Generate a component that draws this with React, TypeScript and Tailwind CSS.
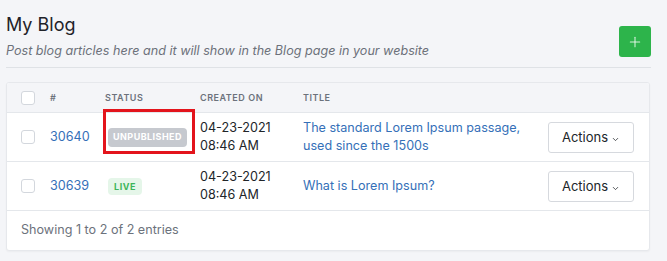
import { ChevronDown, Plus } from 'lucide-react';

const font = { fontFamily: 'Inter, "Noto Sans", sans-serif' };

type Post = {
  id: string;
  status: 'unpublished' | 'live';
  date: string;
  time: string;
  title: string;
};

const posts: Post[] = [
  {
    id: '30640',
    status: 'unpublished',
    date: '04-23-2021',
    time: '08:46 AM',
    title: 'The standard Lorem Ipsum passage, used since the 1500s',
  },
  {
    id: '30639',
    status: 'live',
    date: '04-23-2021',
    time: '08:46 AM',
    title: 'What is Lorem Ipsum?',
  },
];

const cols = 'grid grid-cols-[43px_55px_95px_103px_1fr_102px] items-center';

function Checkbox() {
  return (
    <span className="ml-[14px] block h-[14px] w-[14px] rounded-[3px] border border-[#d3d7dd] bg-white" />
  );
}

function StatusBadge({ status }: { status: Post['status'] }) {
  if (status === 'live') {
    return (
      <span className="ml-[3px] inline-flex h-[17px] items-center rounded-[4px] bg-[#e5f6e9] px-[6px] text-[9px] font-bold tracking-[0.06em] text-[#3cb55a]">
        LIVE
      </span>
    );
  }
  return (
    <span className="ml-[3px] inline-flex h-[19px] items-center rounded-[4px] bg-[#c6c9cf] px-[5px] text-[9px] font-bold tracking-[0.05em] text-white">
      UNPUBLISHED
    </span>
  );
}

export default function App() {
  return (
    <div
      className="h-[261px] w-[667px] overflow-hidden bg-[#f4f5f8] pl-[6px] text-[#212529]"
      style={font}
    >
      {/* Page header */}
      <div className="flex w-[645px] items-start justify-between border-b border-[#dfe2e6] pb-[6px] pt-[13px]">
        <div>
          <h1 className="text-[18px] leading-[24px] font-normal text-[#1f2329]">My Blog</h1>
          <p className="mt-[4px] text-[12.6px] leading-[20px] italic text-[#6c717a]">
            Post blog articles here and it will show in the Blog page in your website
          </p>
        </div>
        <button className="mt-[13px] flex h-[31px] w-[32px] items-center justify-center rounded-[3px] bg-[#2db44b] text-white/80">
          <Plus size={16} strokeWidth={1.6} />
        </button>
      </div>

      {/* Table card */}
      <div className="mt-[14px] w-[644px] overflow-hidden rounded-[3px] border border-[#e6e8ec] bg-white shadow-[0_1px_2px_rgba(0,0,0,0.04)]">
        <div className={`${cols} h-[30px] border-b border-[#e4e7eb] bg-[#f4f5f8] text-[9px] font-semibold tracking-[0.06em] text-[#6c727c]`}>
          <Checkbox />
          <span>#</span>
          <span>STATUS</span>
          <span>CREATED ON</span>
          <span>TITLE</span>
          <span />
        </div>

        {posts.map((post, i) => (
          <div
            key={post.id}
            className={`${cols} h-[49px] border-b border-[#e4e7eb] text-[12.6px] leading-[18px]`}
          >
            <Checkbox />
            <span className="text-[#3570b8]">{post.id}</span>
            <div className="relative">
              <StatusBadge status={post.status} />
              {i === 0 && (
                <span className="absolute left-[-2px] top-[-18px] h-[45px] w-[92px] border-[3px] border-[#e3141c]" />
              )}
            </div>
            <div className="text-[#212529]">
              <div>{post.date}</div>
              <div>{post.time}</div>
            </div>
            <span className="pr-[8px] text-[#3570b8]">{post.title}</span>
            <div className="flex justify-end pr-[15px]">
              <button className="flex h-[31px] w-[86px] items-center justify-center gap-[3px] rounded-[3px] border border-[#d6d9de] bg-white text-[13px] text-[#212529]">
                Actions
                <ChevronDown size={9} strokeWidth={2} className="mt-[4px]" />
              </button>
            </div>
          </div>
        ))}

        <div className="flex h-[39px] items-center pl-[14px] text-[12.6px] text-[#6c727c]">
          Showing 1 to 2 of 2 entries
        </div>
      </div>
    </div>
  );
}
